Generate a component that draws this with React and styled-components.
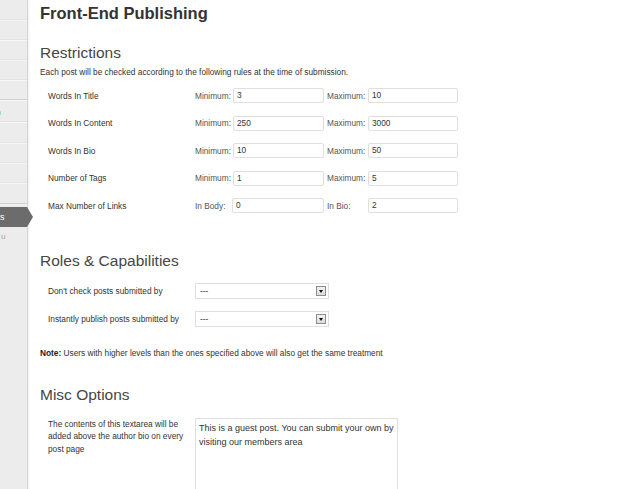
import React from "react";
import styled, { createGlobalStyle } from "styled-components";

const GlobalStyle = createGlobalStyle`
  html, body {
    margin: 0;
    padding: 0;
    background: #fff;
  }

  body {
    font-family: "Liberation Sans", Arial, sans-serif;
    color: #333;
  }
`;

const Page = styled.div`
  display: flex;
  min-height: 489px;
  overflow: hidden;
`;

const Sidebar = styled.nav`
  position: relative;
  z-index: 2;
  flex: 0 0 27px;
  background: #ececec;
  border-right: 1px solid #d6d6d6;
  box-shadow: 1px 0 2px rgba(0, 0, 0, 0.07);
`;

const SideItem = styled.div`
  height: ${(p) => p.h}px;
  box-sizing: border-box;
  border-bottom: 1px solid ${(p) => (p.dark ? "#cfcfcf" : "#e2e2e2")};
  box-shadow: 0 1px 0 #f6f6f6;
  position: relative;
`;

const Dot = styled.span`
  position: absolute;
  left: -2px;
  top: 11px;
  width: 3px;
  height: 4px;
  border-radius: 1px;
  background: #9fd6d2;
`;

const ActiveItem = styled.div`
  position: relative;
  margin-top: 3px;
  height: 20px;
  background: #6c6c6c;
  color: #fff;
  font-size: 9px;
  line-height: 20px;
  padding-left: 0;
  white-space: nowrap;

  &::after {
    content: "";
    position: absolute;
    right: -6px;
    top: 0;
    border-top: 10px solid transparent;
    border-bottom: 10px solid transparent;
    border-left: 6px solid #6c6c6c;
  }
`;

const SubItem = styled.div`
  font-size: 8px;
  color: #a5a5a5;
  line-height: 12px;
  padding: 4px 0 0 1px;
  white-space: nowrap;
`;

const Main = styled.main`
  flex: 1;
  padding-left: 12px;
`;

const Title = styled.h2`
  margin: 3px 0 0;
  font-size: 16.5px;
  line-height: 20px;
  font-weight: bold;
  color: #333;
`;

const SectionHeading = styled.h3`
  margin: ${(p) => p.top}px 0 0;
  font-size: 15.5px;
  line-height: 20px;
  font-weight: normal;
  color: #464646;
`;

const Description = styled.p`
  margin: 3px 0 0;
  font-size: 8.3px;
  line-height: 12px;
  color: #333;
`;

const Rules = styled.div`
  margin-top: ${(p) => p.top}px;
  padding-left: 8px;
`;

const Row = styled.div`
  display: flex;
  align-items: center;
  height: ${(p) => p.h}px;
`;

const RowLabel = styled.div`
  width: 147px;
  font-size: 8.3px;
  line-height: 12px;
  color: #333;
`;

const Field = styled.label`
  display: flex;
  align-items: center;
  margin-right: 3px;
`;

const FieldName = styled.span`
  width: ${(p) => p.w}px;
  font-size: 8.3px;
  color: #555;
`;

const TextInput = styled.div`
  width: ${(p) => p.w}px;
  height: 15px;
  box-sizing: border-box;
  border: 1px solid #dfdfdf;
  border-radius: 2px;
  background: #fff;
  font-size: 8.3px;
  line-height: 13px;
  padding-left: 3px;
  color: #333;
`;

const Select = styled.div`
  width: 134px;
  height: 16px;
  box-sizing: border-box;
  border: 1px solid #dfdfdf;
  background: #fff;
  display: flex;
  align-items: center;
  justify-content: space-between;
  padding: 0 2px 0 4px;
  font-size: 8.3px;
  color: #333;
`;

const SelectButton = styled.span`
  width: 10px;
  height: 10px;
  box-sizing: border-box;
  border: 1px solid #8d8d8d;
  background: linear-gradient(#f2f2f2, #dcdcdc);
  display: flex;
  align-items: center;
  justify-content: center;

  &::before {
    content: "";
    border-left: 2.5px solid transparent;
    border-right: 2.5px solid transparent;
    border-top: 3px solid #111;
  }
`;

const Note = styled.p`
  margin: 14px 0 0;
  font-size: 8.3px;
  line-height: 12px;
  color: #333;

  b {
    color: #222;
  }
`;

const MiscRow = styled.div`
  display: flex;
  align-items: flex-start;
  margin-top: 12.5px;
  padding-left: 8px;
`;

const MiscLabel = styled.div`
  width: 136px;
  margin-right: 11px;
  font-size: 8.3px;
  line-height: 12.5px;
  color: #333;
`;

const TextArea = styled.div`
  width: 203px;
  height: 110px;
  box-sizing: border-box;
  border: 1px solid #dfdfdf;
  padding: 2px 3px;
  font-size: 9px;
  line-height: 14px;
  color: #333;
`;

const restrictions = [
  ["Words In Title", "Minimum:", "3", "Maximum:", "10"],
  ["Words In Content", "Minimum:", "250", "Maximum:", "3000"],
  ["Words In Bio", "Minimum:", "10", "Maximum:", "50"],
  ["Number of Tags", "Minimum:", "1", "Maximum:", "5"],
  ["Max Number of Links", "In Body:", "0", "In Bio:", "2"],
];

const App = () => (
  <>
    <GlobalStyle />
    <Page>
      <Sidebar>
        <SideItem h={20} />
        <SideItem h={20} />
        <SideItem h={20} />
        <SideItem h={20} />
        <SideItem h={20} dark />
        <SideItem h={22}>
          <Dot />
        </SideItem>
        <SideItem h={21} />
        <SideItem h={20} />
        <SideItem h={20} />
        <SideItem h={21} dark />
        <ActiveItem>s</ActiveItem>
        <SubItem>u</SubItem>
      </Sidebar>

      <Main>
        <Title>Front-End Publishing</Title>

        <SectionHeading top={20}>Restrictions</SectionHeading>
        <Description>
          Each post will be checked according to the following rules at the
          time of submission.
        </Description>
        <Rules top={3.75}>
          {restrictions.map(([label, minName, min, maxName, max]) => (
            <Row key={label} h={27.5}>
              <RowLabel>{label}</RowLabel>
              <Field>
                <FieldName w={minName === "In Body:" ? 37 : 38}>
                  {minName}
                </FieldName>
                <TextInput w={minName === "In Body:" ? 92 : 91}>{min}</TextInput>
              </Field>
              <Field>
                <FieldName w={41}>{maxName}</FieldName>
                <TextInput w={90}>{max}</TextInput>
              </Field>
            </Row>
          ))}
        </Rules>

        <SectionHeading top={31.5}>Roles &amp; Capabilities</SectionHeading>
        <Rules top={6.25}>
          <Row h={28}>
            <RowLabel>Don't check posts submitted by</RowLabel>
            <Select>
              ---
              <SelectButton />
            </Select>
          </Row>
          <Row h={28}>
            <RowLabel>Instantly publish posts submitted by</RowLabel>
            <Select>
              ---
              <SelectButton />
            </Select>
          </Row>
        </Rules>
        <Note>
          <b>Note:</b> Users with higher levels than the ones specified above
          will also get the same treatment
        </Note>

        <SectionHeading top={26}>Misc Options</SectionHeading>
        <MiscRow>
          <MiscLabel>
            The contents of this textarea will be added above the author bio
            on every post page
          </MiscLabel>
          <TextArea>
            This is a guest post. You can submit your own by visiting our
            members area
          </TextArea>
        </MiscRow>
      </Main>
    </Page>
  </>
);

export default App;
